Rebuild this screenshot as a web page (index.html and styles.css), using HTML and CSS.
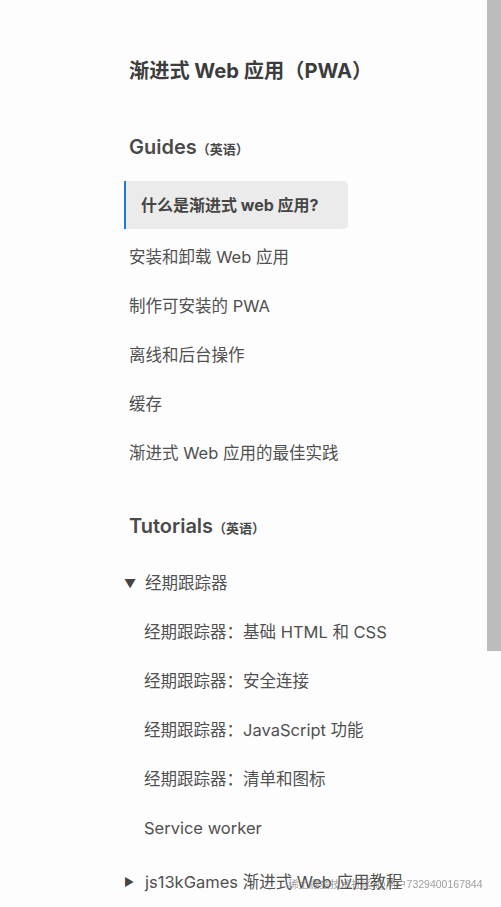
FILE: index.html
```html
<!DOCTYPE html>
<html lang="zh-CN">
<head>
<meta charset="utf-8">
<link rel="stylesheet" href="styles.css">
</head>
<body>
<nav class="sidebar">
  <h1 class="title">渐进式 Web 应用（PWA）</h1>
  <h2 class="section">Guides<span class="lang">（英语）</span></h2>
  <ul class="list">
    <li class="item active">什么是渐进式 web 应用?</li>
    <li class="item">安装和卸载 Web 应用</li>
    <li class="item">制作可安装的 PWA</li>
    <li class="item">离线和后台操作</li>
    <li class="item">缓存</li>
    <li class="item">渐进式 Web 应用的最佳实践</li>
  </ul>
  <h2 class="section section-tut">Tutorials<span class="lang">（英语）</span></h2>
  <ul class="list">
    <li class="item group"><span class="tri">▼</span>经期跟踪器</li>
    <li class="item sub">经期跟踪器：基础 HTML 和 CSS</li>
    <li class="item sub">经期跟踪器：安全连接</li>
    <li class="item sub">经期跟踪器：JavaScript 功能</li>
    <li class="item sub">经期跟踪器：清单和图标</li>
    <li class="item sub">Service worker</li>
    <li class="item group last"><span class="tri small">▶</span>js13kGames 渐进式 Web 应用教程</li>
  </ul>
</nav>
<div class="scrollbar"></div>
<div class="watermark">稀土掘金技术社区 @用户7329400167844</div>
</body>
</html>
```
FILE: styles.css
```css
html, body {
  margin: 0;
  padding: 0;
  background: #fdfdfd;
  height: 100%;
  overflow: hidden;
}
body {
  font-family: "Inter", "Noto Sans CJK SC", sans-serif;
  color: #505050;
}
.sidebar {
  padding: 57px 0 0 129px;
  width: 340px;
}
.title {
  margin: 0;
  font-size: 20.2px;
  line-height: 28px;
  font-weight: 700;
  color: #3c3c3c;
}
.section {
  margin: 48px 0 18px;
  font-size: 20px;
  line-height: 28px;
  font-weight: 600;
  color: #4a4a4a;
}
.section-tut {
  margin-top: 34px;
  margin-bottom: 17px;
}
.lang {
  font-size: 13px;
  font-weight: 700;
}
.list {
  list-style: none;
  margin: 0;
  padding: 0;
}
.item {
  height: 49px;
  line-height: 49px;
  font-size: 16.5px;
  white-space: nowrap;
}
.active {
  margin-left: -5px;
  width: 207px;
  height: 48px;
  line-height: 48px;
  padding-left: 15px;
  background: #ebebeb;
  border-left: 2px solid #1a7ad9;
  border-radius: 0 5px 5px 0;
  font-weight: 700;
  font-size: 16px;
  color: #454545;
  margin-bottom: 4px;
}
.group {
  margin-left: -5px;
  display: flex;
  align-items: center;
}
.tri {
  width: 21px;
  font-size: 12px;
  color: #444;
}
.tri.small {
  font-size: 11px;
}
.sub {
  padding-left: 15px;
}
.last {
  margin-top: 5px;
}
.scrollbar {
  position: fixed;
  top: 0;
  right: 0;
  width: 14px;
  height: 651px;
  background: #bcbcbc;
}
.watermark {
  position: fixed;
  left: 288px;
  top: 877px;
  font-size: 10.5px;
  line-height: 14px;
  color: rgba(120, 120, 120, 0.7);
  font-family: "Liberation Sans", "Noto Sans CJK SC", sans-serif;
  white-space: nowrap;
}
```
